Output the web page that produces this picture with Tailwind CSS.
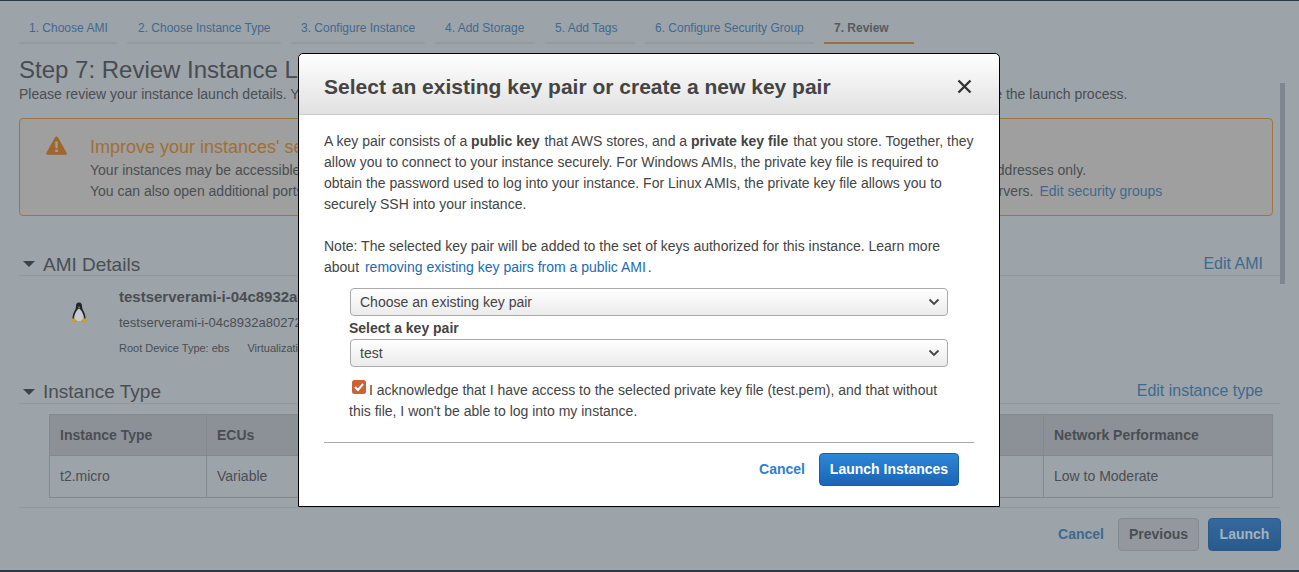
<!DOCTYPE html>
<html lang="en">
<head>
<meta charset="UTF-8">
<title>Launch Instance Wizard</title>
<script src="https://cdn.jsdelivr.net/npm/@tailwindcss/browser@4"></script>
</head>
<body class="font-['Liberation_Sans',Arial,sans-serif]">
<div class="relative h-[572px] w-[1299px] overflow-hidden bg-[#9ca3a9] text-[14px] text-[#4a4e53]">

	<div class="h-px bg-[#2b3a48]"></div>

	<!-- wizard tabs -->
	<div class="flex gap-[10px] pl-[19px] pt-[19px] text-[12px] leading-[16px] text-[#3f6a8f]">
		<div class="h-[24px] w-[98px] border-b-[2px] border-[#949ba1] pl-[10px]">1. Choose AMI</div>
		<div class="h-[24px] w-[154px] border-b-[2px] border-[#949ba1] pl-[11px]">2. Choose Instance Type</div>
		<div class="h-[24px] w-[134px] border-b-[2px] border-[#949ba1] pl-[10px]">3. Configure Instance</div>
		<div class="h-[24px] w-[100px] border-b-[2px] border-[#949ba1] pl-[10px]">4. Add Storage</div>
		<div class="h-[24px] w-[90px] border-b-[2px] border-[#949ba1] pl-[10px]">5. Add Tags</div>
		<div class="h-[24px] w-[169px] border-b-[2px] border-[#949ba1] pl-[10px]">6. Configure Security Group</div>
		<div class="h-[24px] w-[90px] border-b-[2px] border-[#98703f] pl-[10px] font-bold text-[#565b60]">7. Review</div>
	</div>

	<div class="pl-[19px] pt-[12px]">
		<h1 class="text-[24px] leading-[28px] text-[#474c52]">Step 7: Review Instance Launch</h1>
		<p class="mt-[2px] whitespace-nowrap leading-[17px]">Please review your instance launch details. You can go back to edit changes for each section. <span class="ml-[4px]">Click Launch to assign a key pair to your instance and complete the launch process.</span></p>
	</div>

	<!-- security warning -->
	<div class="ml-[19px] mt-[15px] flex h-[98px] w-[1254px] rounded-[4px] border border-[#a0763f] bg-[#9e9f9e]">
		<svg class="ml-[26px] mt-[17px] h-[19px] w-[21px]" viewBox="0 0 21 19"><path fill="#a0662c" d="M10.5 0.5c.6 0 1.1.3 1.4.8l8.7 15.4c.6 1-.1 2.1-1.3 2.1H1.7C.5 18.8-.2 17.7.4 16.7L9.1 1.3c.3-.5.8-.8 1.4-.8z"/><path fill="#9e9f9e" d="M9.2 5.5h2.6l-.3 6.7H9.5zM9.2 13.6h2.6v2.5H9.2z"/></svg>
		<div class="ml-[23px] whitespace-nowrap pt-[18px]">
			<div class="text-[18px] leading-[21px] text-[#a06f36]">Improve your instances' security. Your security group, launch-wizard, is open to the world.</div>
			<div class="mt-[2px] leading-[21px]">Your instances may be accessible from any IP address. We recommend that you update your security group rules to allow access from known IP addresses only.</div>
			<div class="leading-[21px]">You can also open additional ports in your security group to facilitate access to the application or service you're running, e.g., HTTP (80) for web servers. <a class="ml-[2px] text-[#3f6a8f]">Edit security groups</a></div>
		</div>
	</div>

	<!-- AMI details -->
	<div class="ml-[19px] mt-[36px] flex h-[24px] w-[1261px] items-center border-b border-[#92999f] pr-[17px]">
		<span class="ml-[4px] h-0 w-0 border-x-[6px] border-t-[6px] border-x-transparent border-t-[#3d4248]"></span>
		<span class="ml-[8px] mt-[2px] text-[19px] leading-[22px]">AMI Details</span>
		<a class="ml-auto text-[16px] leading-[20px] text-[#3f6a8f]">Edit AMI</a>
	</div>
	<div class="flex h-[104px] pl-[70px] pt-[11px]">
		<svg class="mt-[15px] h-[22px] w-[18px]" viewBox="0 0 18 22">
			<path fill="#20252b" d="M9 .5c-2 0-3 1.5-3 3.5 0 2-.5 3-1.500 5S2.500 13.500 2.500 16c0 2 1.500 3 2.500 3h8c1 0 2.500-1 2.500-3 0-2.500-1-5-2-7s-1.500-3-1.500-5c0-2-1-3.500-3-3.500z"/>
			<path fill="#c8ccce" d="M9 6.500c-1.800 1-4.800 5.500-4.800 9S6.500 19 9 19s4.800 0 4.800-3.500S10.800 7.500 9 6.500z"/>
			<path fill="#bfa044" d="M7.800 4.800h2.400L9 6.300zM.8 18l3.700-2.500L7 20l-3 1.500-1.500-1.500zM17.200 18l-3.700-2.500L11 20l3 1.500 1.500-1.500z"/>
		</svg>
		<div class="ml-[31px] whitespace-nowrap">
			<div class="text-[15px] font-bold leading-[20px]">testserverami-i-04c8932a80272</div>
			<div class="mt-[8px] text-[13px] leading-[16px]">testserverami-i-04c8932a80272</div>
			<div class="mt-[10px] text-[11px] leading-[14px]">Root Device Type: ebs<span class="ml-[18px]">Virtualization type: hvm</span></div>
		</div>
	</div>

	<!-- instance type -->
	<div class="ml-[19px] flex h-[24px] w-[1261px] items-center border-b border-[#92999f] pr-[17px]">
		<span class="ml-[4px] h-0 w-0 border-x-[6px] border-t-[6px] border-x-transparent border-t-[#3d4248]"></span>
		<span class="ml-[8px] text-[19px] leading-[22px]">Instance Type</span>
		<a class="ml-auto mb-[2px] text-[16px] leading-[20px] text-[#3f6a8f]">Edit instance type</a>
	</div>
	<div class="ml-[49px] mt-[10px] grid h-[84px] w-[1224px] grid-cols-[157px_837px_228px] grid-rows-[41px_41px] border border-[#83898f]">
		<div class="flex items-center border-b border-r border-[#83898f] bg-[#8b9197] pl-[10px] font-bold">Instance Type</div>
		<div class="flex items-center border-b border-r border-[#83898f] bg-[#8b9197] pl-[10px] font-bold">ECUs</div>
		<div class="flex items-center border-b border-[#83898f] bg-[#8b9197] pl-[10px] font-bold">Network Performance</div>
		<div class="flex items-center border-r border-[#83898f] pl-[10px]">t2.micro</div>
		<div class="flex items-center border-r border-[#83898f] pl-[10px]">Variable</div>
		<div class="flex items-center pl-[10px]">Low to Moderate</div>
	</div>
	<div class="ml-[19px] mt-[9px] w-[1261px] border-t border-[#92999f]"></div>

	<!-- wizard footer -->
	<div class="mt-[10px] flex h-[33px] w-[1281px] items-center justify-end font-bold">
		<a class="mr-[14px] text-[#3f6a8f]">Cancel</a>
		<span class="mr-[9px] flex h-[33px] w-[81px] items-center justify-center rounded-[4px] border border-[#858b90] bg-[#92989e]">Previous</span>
		<span class="flex h-[33px] w-[73px] items-center justify-center rounded-[4px] border border-[#2a5a8c] bg-gradient-to-b from-[#35689b] to-[#2a5a8c] text-[#a3b2c0]">Launch</span>
	</div>

	<div class="absolute bottom-0 left-0 h-[2px] w-full bg-[#2b3a48]"></div>
	<!-- page scrollbar -->
	<div class="absolute left-[1280px] top-[83px] h-[201px] w-[5px] bg-[#7f868d]"></div>

	<!-- key pair modal -->
	<div class="absolute left-[298px] top-[53px] h-[454px] w-[702px] rounded-t-[5px] border border-black bg-white text-[#444]">
		<div class="flex h-[61px] items-center rounded-t-[5px] border-b border-[#ccc] bg-gradient-to-b from-white to-[#e1e1e1] pl-[25px] pr-[27px] pt-[5px]">
			<h2 class="text-[21px] font-bold">Select an existing key pair or create a new key pair</h2>
			<svg class="ml-auto h-[15px] w-[15px]" viewBox="0 0 15 15"><path d="M1.5 1.5l12 12M13.5 1.5l-12 12" stroke="#333" stroke-width="2.4" fill="none"/></svg>
		</div>
		<div class="px-[25px] pt-[16px] leading-[21px]">
			<p>A key pair consists of a <b class="mr-px">public key</b> that AWS stores, and a <b class="mr-px">private key file</b> that you store. Together, they allow you to connect to your instance securely. For Windows AMIs, the private key file is required to obtain the password used to log into your instance. For Linux AMIs, the private key file allows you to securely SSH into your instance.</p>
			<p class="mt-[21px]">Note: The selected key pair will be added to the set of keys authorized for this instance. Learn more about <a class="mx-[2px] text-[#1a6bb5]">removing existing key pairs from a public AMI</a>.</p>

			<div class="ml-[25px] mt-[10px] w-[599px]">
				<div class="relative ml-[1px] h-[28px] w-[598px]">
					<select class="h-full w-full appearance-none rounded-[4px] border border-[#aaa] bg-gradient-to-b from-white to-[#ebebeb] pl-[9px] text-[14px]"><option>Choose an existing key pair</option></select>
					<svg class="absolute right-[8px] top-[10px] h-[8px] w-[12px]" viewBox="0 0 12 8"><path d="M1.5 1.5 6 6l4.5-4.5" stroke="#444" stroke-width="1.8" fill="none"/></svg>
				</div>
				<label class="mt-[2px] block font-bold leading-[21px]">Select a key pair</label>
				<div class="relative ml-[1px] h-[28px] w-[598px]">
					<select class="h-full w-full appearance-none rounded-[4px] border border-[#aaa] bg-gradient-to-b from-white to-[#ebebeb] pl-[9px] text-[14px]"><option>test</option></select>
					<svg class="absolute right-[8px] top-[10px] h-[8px] w-[12px]" viewBox="0 0 12 8"><path d="M1.5 1.5 6 6l4.5-4.5" stroke="#444" stroke-width="1.8" fill="none"/></svg>
				</div>
				<p class="mt-[13px]">
					<svg class="mb-[1px] ml-[3px] mr-[3px] inline-block h-[14px] w-[14px] align-baseline" viewBox="0 0 14 14"><rect width="14" height="14" rx="2.5" fill="#cc6238"/><path d="M3 7l3 3 5-6" stroke="#fff" stroke-width="2" fill="none"/></svg>I acknowledge that I have access to the selected private key file (test.pem), and that without this file, I won't be able to log into my instance.
				</p>
			</div>

			<div class="mt-[20px] border-t border-[#aaa]"></div>
			<div class="flex items-center justify-end pr-[15px] pt-[10px] font-bold">
				<a class="mr-[14px] text-[#2f80d0]">Cancel</a>
				<button class="h-[33px] w-[140px] rounded-[4px] border border-[#1a5ea6] bg-gradient-to-b from-[#2e86d6] to-[#1a65b8] text-white">Launch Instances</button>
			</div>
		</div>
	</div>
</div>
</body>
</html>
